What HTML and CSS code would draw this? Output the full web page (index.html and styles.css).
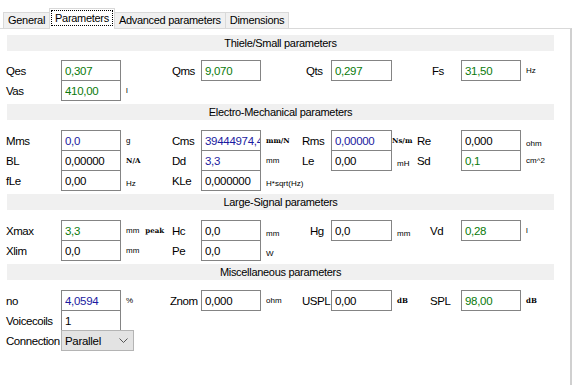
FILE: index.html
```html
<!DOCTYPE html>
<html lang="en">
<head>
    <meta charset="UTF-8">
    <title>Parameters</title>
    <link rel="stylesheet" href="styles.css">
</head>
<body>

    <div class="tabs">
        <div class="tab">General</div>
        <div class="tab active"><span class="focus">Parameters</span></div>
        <div class="tab">Advanced parameters</div>
        <div class="tab">Dimensions</div>
    </div>

    <div class="panel">

        <div class="group">
            <div class="group-title">Thiele/Small parameters</div>
            <div class="rows">
                <div class="row">
                    <span class="lbl">Qes</span>
                    <input class="box green" value="0,307" readonly>
                    <span class="unit"></span>
                    <span class="lbl">Qms</span>
                    <input class="box green" value="9,070" readonly>
                    <span class="unit"></span>
                    <span class="lbl in4">Qts</span>
                    <input class="box green" value="0,297" readonly>
                    <span class="unit"></span>
                    <span class="lbl in15">Fs</span>
                    <input class="box green" value="31,50" readonly>
                    <span class="unit">Hz</span>
                </div>
                <div class="row">
                    <span class="lbl">Vas</span>
                    <input class="box green" value="410,00" readonly>
                    <span class="unit">l</span>
                </div>
            </div>
        </div>

        <div class="group">
            <div class="group-title">Electro-Mechanical parameters</div>
            <div class="rows">
                <div class="row">
                    <span class="lbl">Mms</span>
                    <input class="box blue" value="0,0" readonly>
                    <span class="unit">g</span>
                    <span class="lbl">Cms</span>
                    <input class="box blue narrow" value="39444974,4" readonly>
                    <span class="unit si">mm/N</span>
                    <span class="lbl">Rms</span>
                    <input class="box blue" value="0,00000" readonly>
                    <span class="unit si tight">Ns/m</span>
                    <span class="lbl">Re</span>
                    <input class="box" value="0,000" readonly>
                    <span class="unit low">ohm</span>
                </div>
                <div class="row">
                    <span class="lbl">BL</span>
                    <input class="box" value="0,00000" readonly>
                    <span class="unit si">N/A</span>
                    <span class="lbl">Dd</span>
                    <input class="box blue" value="3,3" readonly>
                    <span class="unit">mm</span>
                    <span class="lbl">Le</span>
                    <input class="box" value="0,00" readonly>
                    <span class="unit low">mH</span>
                    <span class="lbl">Sd</span>
                    <input class="box green" value="0,1" readonly>
                    <span class="unit">cm^2</span>
                </div>
                <div class="row">
                    <span class="lbl">fLe</span>
                    <input class="box" value="0,00" readonly>
                    <span class="unit low">Hz</span>
                    <span class="lbl">KLe</span>
                    <input class="box" value="0,000000" readonly>
                    <span class="unit low">H*sqrt(Hz)</span>
                </div>
            </div>
        </div>

        <div class="group">
            <div class="group-title">Large-Signal parameters</div>
            <div class="rows">
                <div class="row">
                    <span class="lbl">Xmax</span>
                    <input class="box green" value="3,3" readonly>
                    <span class="unit">mm <b class="si peak">peak</b></span>
                    <span class="lbl">Hc</span>
                    <input class="box" value="0,0" readonly>
                    <span class="unit low">mm</span>
                    <span class="lbl in8">Hg</span>
                    <input class="box" value="0,0" readonly>
                    <span class="unit low">mm</span>
                    <span class="lbl in13">Vd</span>
                    <input class="box green" value="0,28" readonly>
                    <span class="unit">l</span>
                </div>
                <div class="row">
                    <span class="lbl">Xlim</span>
                    <input class="box" value="0,0" readonly>
                    <span class="unit">mm</span>
                    <span class="lbl">Pe</span>
                    <input class="box" value="0,0" readonly>
                    <span class="unit low">W</span>
                </div>
            </div>
        </div>

        <div class="group">
            <div class="group-title">Miscellaneous parameters</div>
            <div class="rows">
                <div class="row">
                    <span class="lbl">no</span>
                    <input class="box blue" value="4,0594" readonly>
                    <span class="unit">%</span>
                    <span class="lbl out2">Znom</span>
                    <input class="box" value="0,000" readonly>
                    <span class="unit">ohm</span>
                    <span class="lbl">USPL</span>
                    <input class="box" value="0,00" readonly>
                    <span class="unit si">dB</span>
                    <span class="lbl in13">SPL</span>
                    <input class="box green" value="98,00" readonly>
                    <span class="unit si">dB</span>
                </div>
                <div class="row">
                    <span class="lbl">Voicecoils</span>
                    <input class="box" value="1" readonly>
                </div>
                <div class="row">
                    <span class="lbl">Connection</span>
                    <div class="select">
                        <span>Parallel</span>
                        <svg width="9" height="6" viewBox="0 0 9 6"><polyline points="0.5,0.5 4.5,4.5 8.5,0.5" fill="none" stroke="#555" stroke-width="1"/></svg>
                    </div>
                </div>
            </div>
        </div>

    </div>

</body>
</html>
```

FILE: styles.css
```css
body {
    margin: 0;
    background: #fff;
    color: #000;
    font-family: "Liberation Sans", Arial, sans-serif;
    font-size: 11px;
    letter-spacing: -0.3px;
}
.tabs {
    display: flex;
    align-items: flex-end;
    height: 28px;
    padding-left: 3px;
}
.tab {
    height: 16px;
    line-height: 15px;
    padding: 0 4px;
    margin-right: -1px;
    background: #f0f0f0;
    border: 1px solid #d9d9d9;
    border-bottom: none;
    box-sizing: border-box;
}
.tab.active {
    height: 21px;
    padding: 2px 2px 0;
    margin-bottom: -1px;
    background: #fff;
    position: relative;
    z-index: 1;
}
.focus {
    display: inline-block;
    padding: 0 3px;
    line-height: 14px;
    outline: 1px dotted #000;
}
.panel {
    width: 572px;
    height: 357px;
    box-sizing: border-box;
    border-top: 1px solid #d9d9d9;
    border-right: 2px solid #d0d0d0;
}
.group-title {
    margin: 4px 16px 0 7px;
    height: 16px;
    line-height: 16px;
    text-align: center;
    background: #f0f0f0;
}
.group:first-child .group-title {
    margin-top: 6px;
}
.rows {
    margin-top: 10px;
    padding-left: 6px;
}
.group:first-child .rows {
    margin-top: 9px;
}
.row {
    display: grid;
    grid-template-columns: 55px 60px 51px 29px 60px 41px 29px 61px 25px 44px 60px 40px;
    height: 20px;
}
.lbl {
    display: flex;
    align-items: center;
    font-size: 11.5px;
    letter-spacing: -0.45px;
    white-space: nowrap;
}
.in4 { padding-left: 4px; }
.in8 { padding-left: 8px; }
.in13 { padding-left: 13px; }
.in15 { padding-left: 15px; }
.out2 { margin-left: -2px; }
.box {
    width: 100%;
    height: 21px;
    margin: 0;
    padding: 0 3px;
    box-sizing: border-box;
    border: 1px solid #848484;
    background: #fff;
    font-family: "Liberation Sans", Arial, sans-serif;
    font-size: 11.5px;
    letter-spacing: -0.3px;
    color: #000;
    outline: none;
    position: relative;
}
.box.narrow { padding-right: 0; }
.green { color: #0a7a0a; }
.blue { color: #1a1aa0; }
.unit {
    display: flex;
    align-items: center;
    padding-left: 5px;
    font-size: 8px;
    letter-spacing: 0;
    white-space: nowrap;
}
.unit.low {
    align-items: flex-end;
    padding-bottom: 3px;
}
.unit.tight { padding-left: 0; }
.si {
    font-family: "DejaVu Serif", serif;
    font-weight: bold;
    font-size: 7px;
}
.peak {
    margin-left: 6px;
}
.select {
    width: 73px;
    height: 21px;
    box-sizing: border-box;
    display: flex;
    align-items: center;
    justify-content: space-between;
    padding: 0 5px 0 3px;
    background: #e3e3e3;
    border: 1px solid #b4b4b4;
    font-size: 11.5px;
    position: relative;
}
```
